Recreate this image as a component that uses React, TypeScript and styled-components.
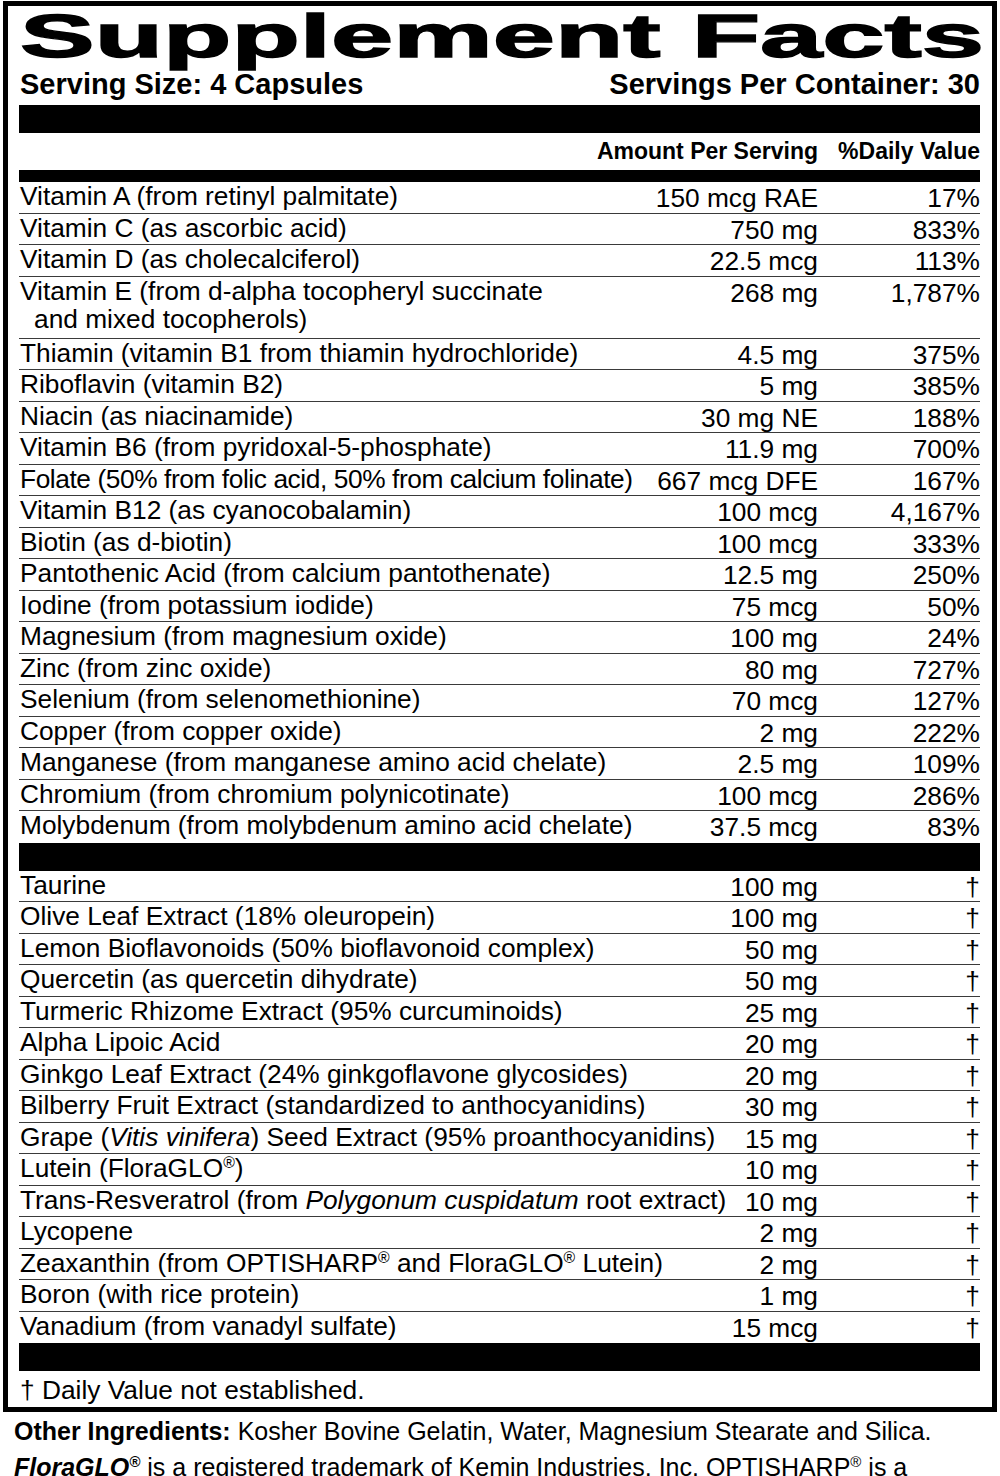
import React from 'react';
import styled, { createGlobalStyle } from 'styled-components';

const GlobalStyle = createGlobalStyle`
  html, body {
    margin: 0;
    padding: 0;
    background: #fff;
  }
  body {
    font-family: "Liberation Sans", Arial, Helvetica, sans-serif;
    color: #000;
  }
`;

const Page = styled.div`
  width: 1000px;
`;

// the boxed label
const Label = styled.section`
  margin: 1px 3px 0;
  border: 5px solid #000;
  padding: 0 12px 0 11px;
`;

const Title = styled.h1`
  margin: 0;
  font-size: 61px;
  line-height: 61px;
  font-weight: 700;
  white-space: nowrap;
  padding-left: 1px;

  span {
    display: inline-block;
    transform: scaleX(1.835);
    transform-origin: 0 50%;
    -webkit-text-stroke: 1.4px #000;
  }
`;

const ServingRow = styled.div`
  display: flex;
  justify-content: space-between;
  margin-top: 1px;
  padding-left: 1px;
  font-size: 29px;
  line-height: 32px;
  font-weight: 700;
`;

const Bar = styled.div<{ $h: number; $mt?: number }>`
  height: ${({ $h }) => $h}px;
  margin-top: ${({ $mt }) => $mt || 0}px;
  background: #000;
`;

const HeaderRow = styled.div`
  display: grid;
  grid-template-columns: 1fr auto 162px;
  height: 37px;
  box-sizing: border-box;
  padding-top: 4px;
  font-size: 23px;
  line-height: 28px;
  font-weight: 700;
  text-align: right;
`;

const Row = styled.div<{ $tall?: boolean }>`
  display: grid;
  grid-template-columns: 1fr auto 162px;
  height: ${({ $tall }) => ($tall ? 62 : 31.5)}px;
  box-sizing: border-box;
  border-bottom: 1px solid #3a3a3a;
  padding-left: 1px;
  font-size: 26.3px;
  line-height: 28px;

  &:last-child {
    border-bottom: none;
  }
`;

const Name = styled.div<{ $tight?: boolean }>`
  white-space: nowrap;
  letter-spacing: ${({ $tight }) => ($tight ? '-0.42px' : 'normal')};

  i {
    font-style: italic;
  }
`;

const Indent = styled.div`
  padding-left: 14px;
`;

const Value = styled.div`
  white-space: nowrap;
  text-align: right;
  padding-top: 2px;
`;

const Reg = styled.sup`
  font-size: 0.6em;
  line-height: 0;
  vertical-align: 0.6em;
`;

const Footnote = styled.div`
  padding: 5px 0 3px 1px;
  font-size: 26.3px;
  line-height: 28px;
`;

const Notes = styled.div`
  padding: 4px 60px 0 14px;
  font-size: 25px;
  line-height: 30px;
`;

const Note = styled.p`
  margin: 0 0 6px;

  b {
    font-weight: 700;
  }
`;

const BrandMark = styled.b`
  font-style: italic;
  font-weight: 700;
`;

const R = () => <Reg>®</Reg>;

type Nutrient = { name: React.ReactNode; amount: string; dv: string; tall?: boolean; tight?: boolean };

const vitamins: Nutrient[] = [
  { name: 'Vitamin A (from retinyl palmitate)', amount: '150 mcg RAE', dv: '17%' },
  { name: 'Vitamin C (as ascorbic acid)', amount: '750 mg', dv: '833%' },
  { name: 'Vitamin D (as cholecalciferol)', amount: '22.5 mcg', dv: '113%' },
  {
    name: (
      <>
        Vitamin E (from d-alpha tocopheryl succinate
        <Indent>and mixed tocopherols)</Indent>
      </>
    ),
    amount: '268 mg',
    dv: '1,787%',
    tall: true,
  },
  { name: 'Thiamin (vitamin B1 from thiamin hydrochloride)', amount: '4.5 mg', dv: '375%' },
  { name: 'Riboflavin (vitamin B2)', amount: '5 mg', dv: '385%' },
  { name: 'Niacin (as niacinamide)', amount: '30 mg NE', dv: '188%' },
  { name: 'Vitamin B6 (from pyridoxal-5-phosphate)', amount: '11.9 mg', dv: '700%' },
  {
    name: 'Folate (50% from folic acid, 50% from calcium folinate)',
    amount: '667 mcg DFE',
    dv: '167%',
    tight: true,
  },
  { name: 'Vitamin B12 (as cyanocobalamin)', amount: '100 mcg', dv: '4,167%' },
  { name: 'Biotin (as d-biotin)', amount: '100 mcg', dv: '333%' },
  { name: 'Pantothenic Acid (from calcium pantothenate)', amount: '12.5 mg', dv: '250%' },
  { name: 'Iodine (from potassium iodide)', amount: '75 mcg', dv: '50%' },
  { name: 'Magnesium (from magnesium oxide)', amount: '100 mg', dv: '24%' },
  { name: 'Zinc (from zinc oxide)', amount: '80 mg', dv: '727%' },
  { name: 'Selenium (from selenomethionine)', amount: '70 mcg', dv: '127%' },
  { name: 'Copper (from copper oxide)', amount: '2 mg', dv: '222%' },
  { name: 'Manganese (from manganese amino acid chelate)', amount: '2.5 mg', dv: '109%' },
  { name: 'Chromium (from chromium polynicotinate)', amount: '100 mcg', dv: '286%' },
  { name: 'Molybdenum (from molybdenum amino acid chelate)', amount: '37.5 mcg', dv: '83%' },
];

const others: Nutrient[] = [
  { name: 'Taurine', amount: '100 mg', dv: '†' },
  { name: 'Olive Leaf Extract (18% oleuropein)', amount: '100 mg', dv: '†' },
  { name: 'Lemon Bioflavonoids (50% bioflavonoid complex)', amount: '50 mg', dv: '†' },
  { name: 'Quercetin (as quercetin dihydrate)', amount: '50 mg', dv: '†' },
  { name: 'Turmeric Rhizome Extract (95% curcuminoids)', amount: '25 mg', dv: '†' },
  { name: 'Alpha Lipoic Acid', amount: '20 mg', dv: '†' },
  { name: 'Ginkgo Leaf Extract (24% ginkgoflavone glycosides)', amount: '20 mg', dv: '†' },
  { name: 'Bilberry Fruit Extract (standardized to anthocyanidins)', amount: '30 mg', dv: '†' },
  {
    name: (
      <>
        Grape (<i>Vitis vinifera</i>) Seed Extract (95% proanthocyanidins)
      </>
    ),
    amount: '15 mg',
    dv: '†',
  },
  {
    name: (
      <>
        Lutein (FloraGLO<R />)
      </>
    ),
    amount: '10 mg',
    dv: '†',
  },
  {
    name: (
      <>
        Trans-Resveratrol (from <i>Polygonum cuspidatum</i> root extract)
      </>
    ),
    amount: '10 mg',
    dv: '†',
  },
  { name: 'Lycopene', amount: '2 mg', dv: '†' },
  {
    name: (
      <>
        Zeaxanthin (from OPTISHARP<R /> and FloraGLO<R /> Lutein)
      </>
    ),
    amount: '2 mg',
    dv: '†',
  },
  { name: 'Boron (with rice protein)', amount: '1 mg', dv: '†' },
  { name: 'Vanadium (from vanadyl sulfate)', amount: '15 mcg', dv: '†' },
];

const NutrientRows: React.FC<{ items: Nutrient[] }> = ({ items }) => (
  <div>
    {items.map((n, i) => (
      <Row key={i} $tall={n.tall}>
        <Name $tight={n.tight}>{n.name}</Name>
        <Value>{n.amount}</Value>
        <Value>{n.dv}</Value>
      </Row>
    ))}
  </div>
);

const App: React.FC = () => (
  <Page>
    <GlobalStyle />
    <Label>
      <Title>
        <span>Supplement Facts</span>
      </Title>
      <ServingRow>
        <span>Serving Size: 4 Capsules</span>
        <span>Servings Per Container: 30</span>
      </ServingRow>
      <Bar $h={28} $mt={5} />
      <HeaderRow>
        <span />
        <span>Amount Per Serving</span>
        <span>%Daily Value</span>
      </HeaderRow>
      <Bar $h={12} />
      <NutrientRows items={vitamins} />
      <Bar $h={28} />
      <NutrientRows items={others} />
      <Bar $h={28} />
      <Footnote>† Daily Value not established.</Footnote>
    </Label>
    <Notes>
      <Note>
        <b>Other Ingredients:</b> Kosher Bovine Gelatin, Water, Magnesium Stearate and Silica.
      </Note>
      <Note>
        <BrandMark>
          FloraGLO<R />
        </BrandMark>{' '}
        is a registered trademark of Kemin Industries, Inc. OPTISHARP<R /> is a registered trademark of DSM.
      </Note>
    </Notes>
  </Page>
);

export default App;
